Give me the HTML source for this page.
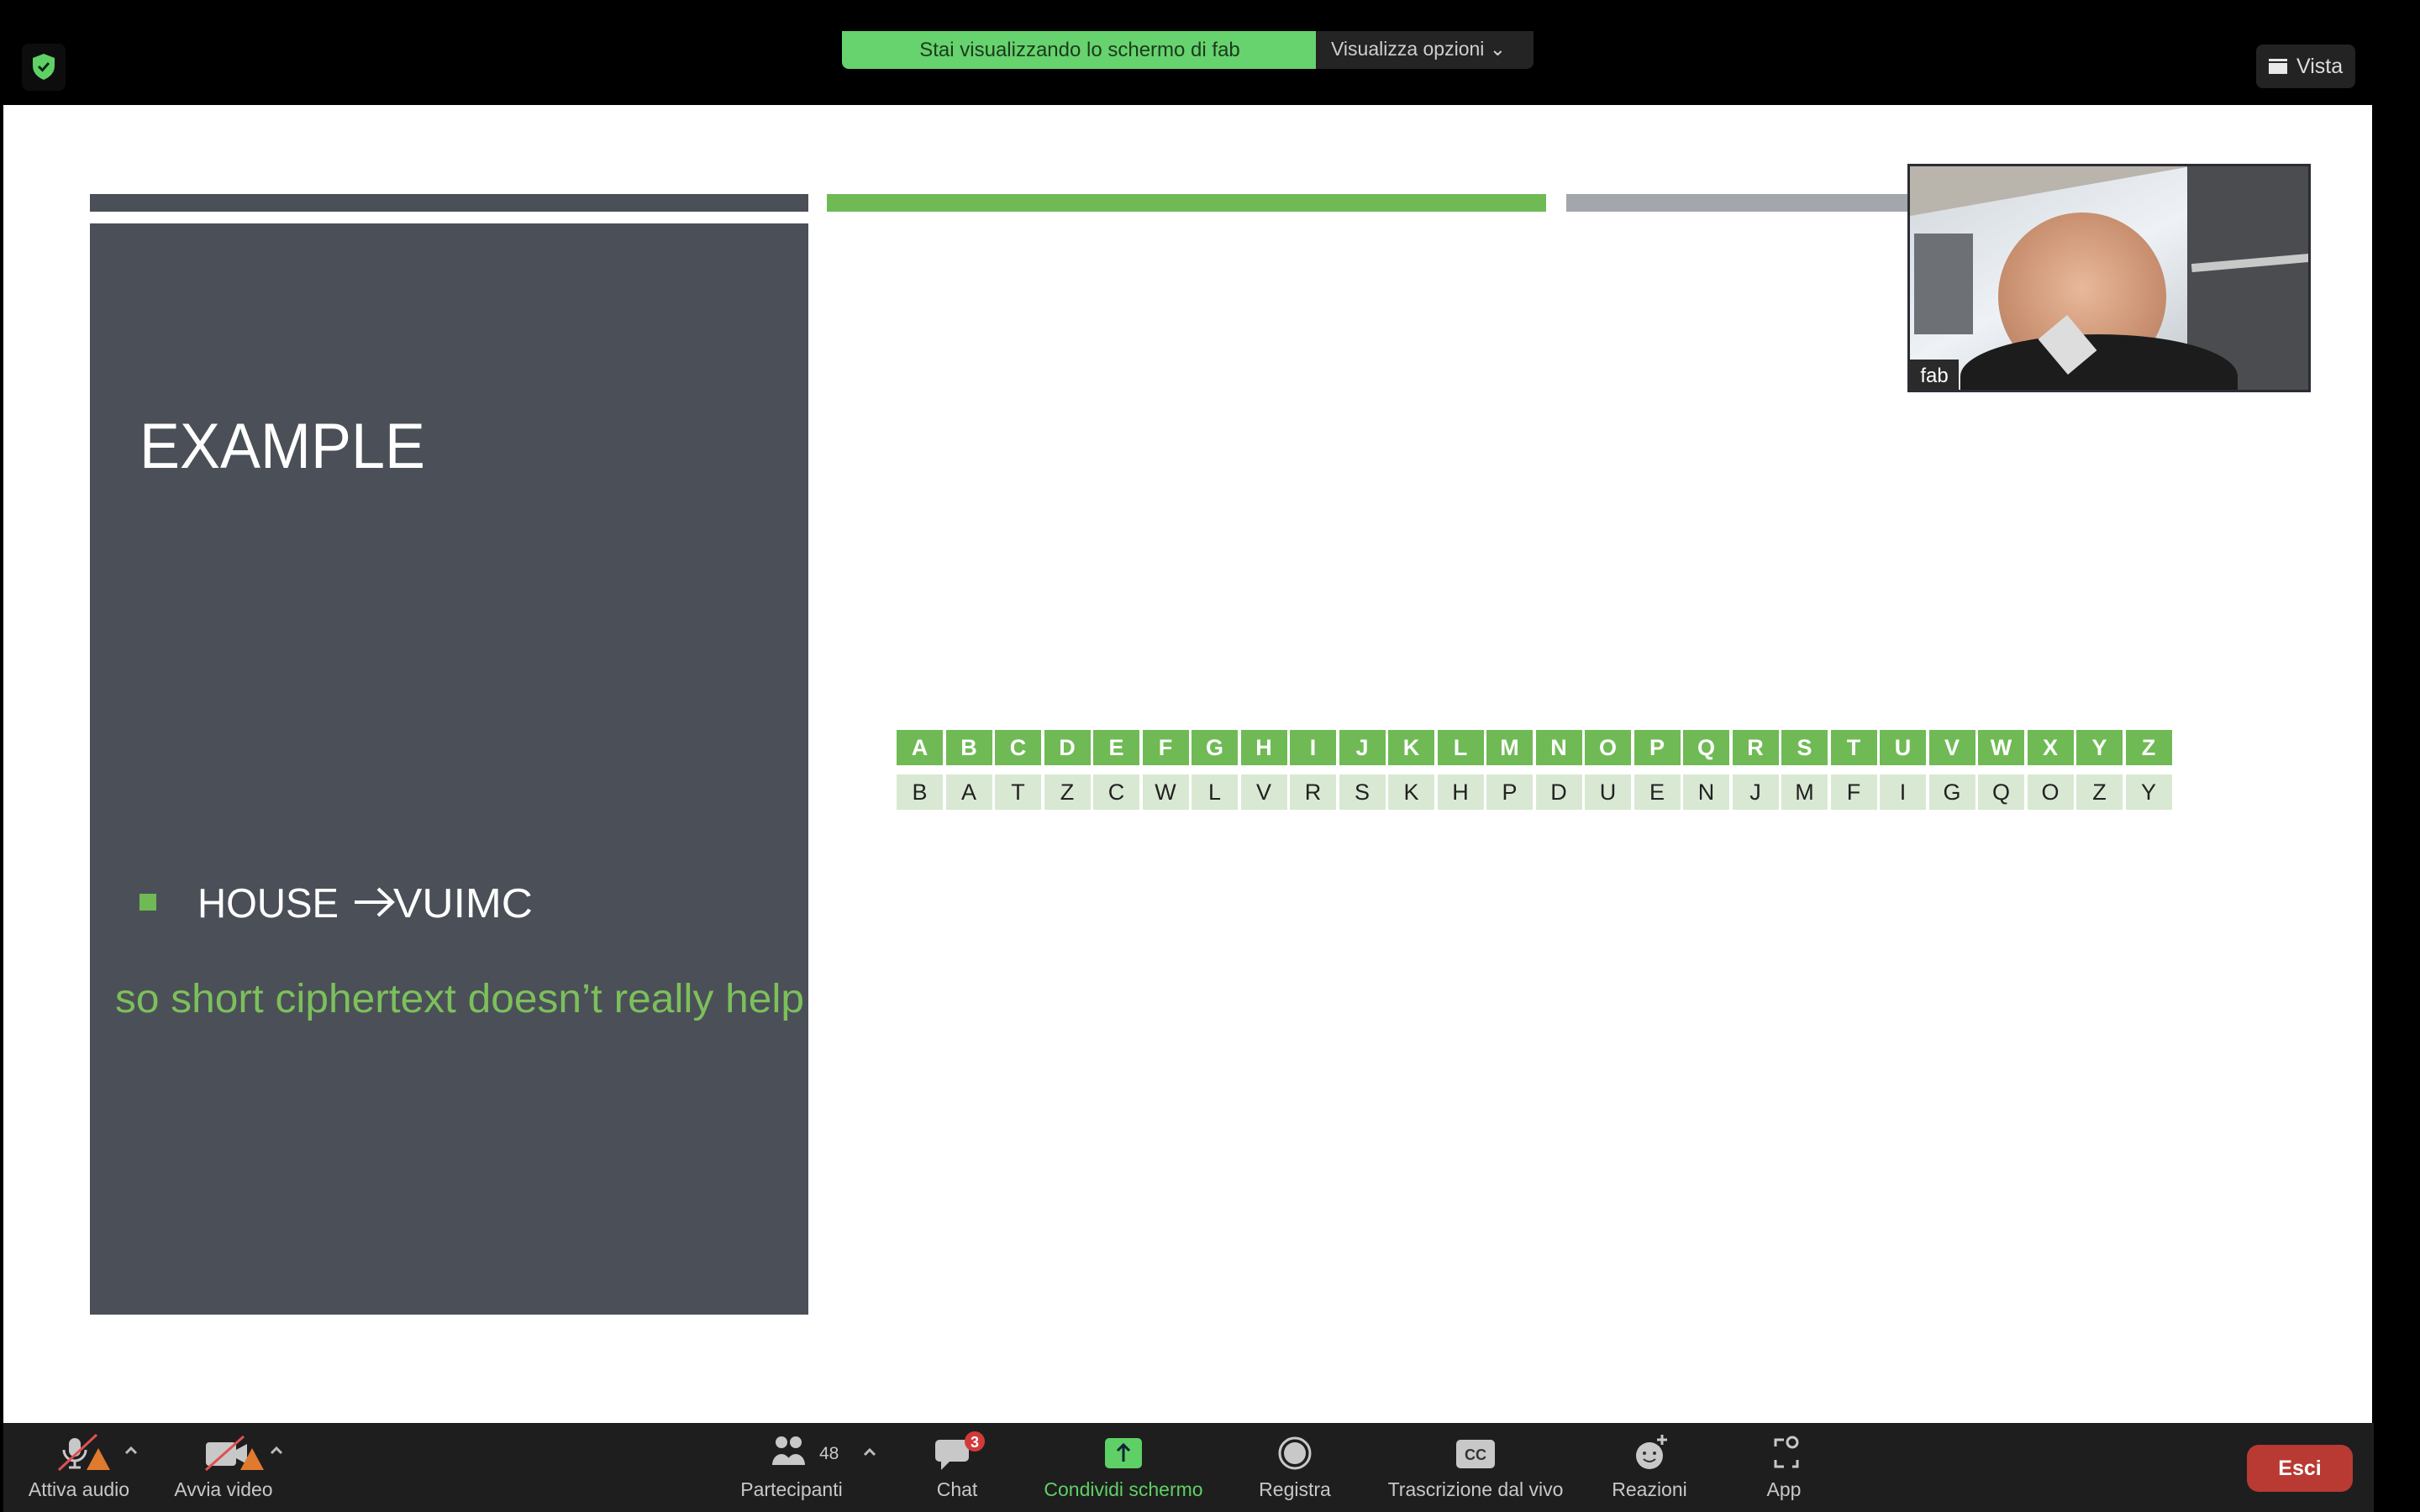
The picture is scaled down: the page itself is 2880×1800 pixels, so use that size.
<!DOCTYPE html>
<html><head><meta charset="utf-8"><style>
*{margin:0;padding:0;box-sizing:border-box}
body{width:2880px;height:1800px;background:#000;position:relative;overflow:hidden;font-family:"Liberation Sans",sans-serif}
.a{position:absolute}
.lbl{position:absolute;top:1760px;font-size:23px;color:#c8c8c8;transform:translateX(-50%);white-space:nowrap}
.cell{position:absolute;width:55px;height:42px;display:flex;align-items:center;justify-content:center;font-size:27px}
</style></head><body>
<div class="a" style="left:26px;top:52px;width:52px;height:56px;background:#0d0d0d;border-radius:8px"></div>
<svg class="a" style="left:37px;top:63px" width="30" height="33" viewBox="0 0 30 33"><path d="M15 1 L28 6 V15 C28 24 22 29 15 32 C8 29 2 24 2 15 V6 Z" fill="#5fd066"/><path d="M9 16 L13.5 20.5 L21 12" stroke="#0a2a0c" stroke-width="3" fill="none"/></svg>
<div class="a" style="left:1002px;top:37px;width:566px;height:45px;background:#66d36e;border-radius:0 0 0 8px;color:#1d3a1c;font-size:24px;line-height:45px;text-align:center">Stai visualizzando lo schermo di fab</div>
<div class="a" style="left:1566px;top:37px;width:259px;height:45px;background:#242424;border-radius:0 0 8px 0;color:#cfcfcf;font-size:23px;line-height:42px;padding-left:18px">Visualizza opzioni &#8964;</div>
<div class="a" style="left:2685px;top:53px;width:118px;height:52px;background:#232323;border-radius:8px;color:#ddd;font-size:25px;line-height:52px;padding-left:48px">Vista</div>
<div class="a" style="left:2700px;top:70px;width:22px;height:18px;background:#e8e8e8;border-top:4px solid #e8e8e8"></div>
<div class="a" style="left:2700px;top:73px;width:22px;height:2px;background:#232323"></div>
<div class="a" style="left:4px;top:125px;width:2819px;height:1569px;background:#fff"></div>
<div class="a" style="left:107px;top:231px;width:855px;height:21px;background:#4b5058"></div>
<div class="a" style="left:984px;top:231px;width:856px;height:21px;background:#6fba55"></div>
<div class="a" style="left:1864px;top:231px;width:420px;height:21px;background:#a3a6ab"></div>
<div class="a" style="left:107px;top:266px;width:855px;height:1299px;background:#4b5058"></div>
<svg class="a" style="left:0;top:0" width="1000" height="1300">
<text x="166" y="557" font-family="Liberation Sans" font-size="76" fill="#fff" textLength="340" lengthAdjust="spacingAndGlyphs">EXAMPLE</text>
<rect x="166" y="1064" width="20" height="20" fill="#6fba55"/>
<text x="235" y="1092" font-family="Liberation Sans" font-size="49" fill="#fff" textLength="168" lengthAdjust="spacingAndGlyphs">HOUSE</text>
<path d="M422 1074 H466 M450 1058 L467 1074 L450 1090" stroke="#fff" stroke-width="4" fill="none"/>
<text x="468" y="1092" font-family="Liberation Sans" font-size="49" fill="#fff" textLength="166" lengthAdjust="spacingAndGlyphs">VUIMC</text>
<text x="137" y="1205" font-family="Liberation Sans" font-size="48" fill="#7cc05a" textLength="820" lengthAdjust="spacingAndGlyphs">so short ciphertext doesn’t really help</text>
</svg>
<div id="tbl"></div>
<div class="a" style="left:2270px;top:195px;width:480px;height:272px;background:#3a3c40;border:3px solid #2a2d33;overflow:hidden">
 <div class="a" style="left:0;top:0;width:480px;height:60px;background:#b9b4ac"></div>
 <div class="a" style="left:0;top:30px;width:330px;height:230px;background:linear-gradient(160deg,#d8dde2,#eef2f6 50%,#c9ced3);transform:skewY(-10deg)"></div>
 <div class="a" style="left:5px;top:80px;width:70px;height:120px;background:#6d7075"></div>
 <div class="a" style="left:330px;top:0;width:150px;height:272px;background:#4a4c50"></div>
 <div class="a" style="left:335px;top:110px;width:140px;height:10px;background:#c8c8c8;transform:rotate(-5deg)"></div>
 <div class="a" style="left:105px;top:55px;width:200px;height:200px;border-radius:50%;background:radial-gradient(circle at 50% 45%,#e8b89a,#c99070 60%,#a87560)"></div>
 <div class="a" style="left:60px;top:200px;width:330px;height:100px;border-radius:50% 50% 0 0;background:#1c1c1c"></div>
 <div class="a" style="left:165px;top:185px;width:45px;height:55px;background:#ddd;transform:rotate(-40deg)"></div>
 <div class="a" style="left:0;top:230px;width:58px;height:39px;background:#2a2a2a;color:#fff;font-size:24px;line-height:39px;text-align:center">fab</div>
</div>
<div class="a" style="left:4px;top:1694px;width:2821px;height:106px;background:#1e1e1e"></div>
<svg class="a" style="left:0;top:1700px" width="2880" height="60">
 <rect x="82" y="12" width="14" height="22" rx="7" fill="#c8c8c8"/><path d="M76 26 a13 13 0 0 0 26 0 M89 39 v8 M82 47 h14" stroke="#c8c8c8" stroke-width="3" fill="none"/>
 <path d="M70 50 L115 8" stroke="#e05050" stroke-width="3"/>
 <path d="M117 24 L131 50 H103 Z" fill="#e07a2e"/>
 <path d="M150 30 l6 -6 l6 6" stroke="#bbb" stroke-width="3" fill="none"/>
 <rect x="245" y="17" width="36" height="28" rx="4" fill="#c8c8c8"/><path d="M281 26 L294 19 V43 L281 36Z" fill="#c8c8c8"/>
 <path d="M245 50 L290 10" stroke="#e05050" stroke-width="3"/>
 <path d="M300 24 L314 50 H286 Z" fill="#e07a2e"/>
 <path d="M323 30 l6 -6 l6 6" stroke="#bbb" stroke-width="3" fill="none"/>
 <circle cx="930" cy="17" r="7" fill="#c8c8c8"/><path d="M919 44 a11 13 0 0 1 22 0Z" fill="#c8c8c8"/>
 <circle cx="947" cy="17" r="7" fill="#c8c8c8"/><path d="M936 44 a11 13 0 0 1 22 0Z" fill="#c8c8c8"/>
 <text x="975" y="37" font-size="21" fill="#c8c8c8" font-family="Liberation Sans">48</text>
 <path d="M1029 32 l6 -6 l6 6" stroke="#bbb" stroke-width="3" fill="none"/>
 <path d="M1118 14 h30 a5 5 0 0 1 5 5 v16 a5 5 0 0 1 -5 5 h-18 l-10 10 v-10 h-2 a5 5 0 0 1 -5 -5 v-16 a5 5 0 0 1 5 -5z" fill="#c8c8c8"/>
 <circle cx="1160" cy="16" r="12" fill="#d23a3a"/><text x="1160" y="23" font-size="18" fill="#fff" text-anchor="middle" font-weight="bold" font-family="Liberation Sans">3</text>
 <rect x="1315" y="12" width="44" height="36" rx="5" fill="#5fd066"/><path d="M1337 40 V20 M1330 27 l7 -7 l7 7" stroke="#123" stroke-width="3" fill="none"/>
 <circle cx="1541" cy="30" r="18" fill="none" stroke="#c8c8c8" stroke-width="3"/><circle cx="1541" cy="30" r="13" fill="#c8c8c8"/>
 <rect x="1733" y="14" width="46" height="34" rx="5" fill="#c8c8c8"/><text x="1756" y="38" font-size="18" fill="#333" text-anchor="middle" font-weight="bold" font-family="Liberation Sans">CC</text>
 <circle cx="1963" cy="33" r="16" fill="#c8c8c8"/><circle cx="1957" cy="30" r="2" fill="#333"/><circle cx="1969" cy="30" r="2" fill="#333"/><path d="M1956 37 q7 6 14 0" stroke="#333" stroke-width="2" fill="none"/>
 <path d="M1978 8 v12 M1972 14 h12" stroke="#c8c8c8" stroke-width="3"/>
 <path d="M2113 22 v-8 h10 M2113 38 v8 h10 M2133 46 h6 v-8" stroke="#c8c8c8" stroke-width="3" fill="none"/><circle cx="2133" cy="17" r="6" fill="none" stroke="#c8c8c8" stroke-width="3"/>
</svg>
<div class="lbl" style="left:94px">Attiva audio</div>
<div class="lbl" style="left:266px">Avvia video</div>
<div class="lbl" style="left:942px">Partecipanti</div>
<div class="lbl" style="left:1139px">Chat</div>
<div class="lbl" style="left:1337px;color:#5fd066">Condividi schermo</div>
<div class="lbl" style="left:1541px">Registra</div>
<div class="lbl" style="left:1756px">Trascrizione dal vivo</div>
<div class="lbl" style="left:1963px">Reazioni</div>
<div class="lbl" style="left:2123px">App</div>
<div class="a" style="left:2674px;top:1720px;width:126px;height:56px;background:#b83a32;border-radius:14px;color:#fff;font-size:25px;font-weight:bold;line-height:56px;text-align:center">Esci</div>
<script>
var t=document.getElementById('tbl'),a="ABCDEFGHIJKLMNOPQRSTUVWXYZ",b="BATZCWLVRSKHPDUENJMFIGQOZY",h="";
for(var i=0;i<26;i++){var x=1067+i*58.5;
h+='<div class="cell" style="left:'+x+'px;top:869px;background:#6fba55;color:#fff;font-weight:bold">'+a[i]+'</div>';
h+='<div class="cell" style="left:'+x+'px;top:922px;background:#d9e8d3;color:#222">'+b[i]+'</div>';}
t.innerHTML=h;
</script>
</body></html>
